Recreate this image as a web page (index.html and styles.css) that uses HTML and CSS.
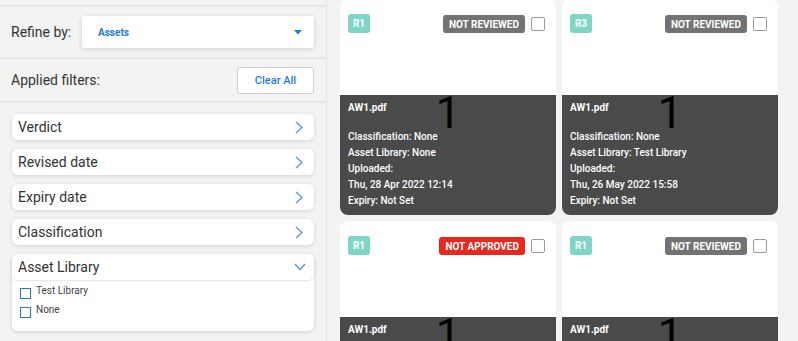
FILE: index.html
```html
<!DOCTYPE html>
<html lang="en">
<head>
    <meta charset="UTF-8">
    <meta name="viewport" content="width=device-width, initial-scale=1.0">
    <title>Assets</title>
    <link rel="stylesheet" href="styles.css">
</head>
<body>
    <div class="page">
        <aside class="sidebar">
            <div class="side-row refine-row">
                <span class="side-label">Refine by:</span>
                <div class="select-box">
                    <span>Assets</span>
                    <svg class="caret" width="8" height="5" viewBox="0 0 8 5"><polygon points="0,0 8,0 4,4.5" fill="#1f7ae0"/></svg>
                </div>
            </div>
            <div class="side-row applied-row">
                <span class="side-label">Applied filters:</span>
                <button class="clear-btn">Clear All</button>
            </div>
            <div class="filters">
                <div class="filter-item">
                    <span>Verdict</span>
                    <svg class="chev" width="8" height="13" viewBox="0 0 8 13"><polyline points="1,1 7,6.5 1,12" fill="none" stroke="#4a90e2" stroke-width="1.2"/></svg>
                </div>
                <div class="filter-item">
                    <span>Revised date</span>
                    <svg class="chev" width="8" height="13" viewBox="0 0 8 13"><polyline points="1,1 7,6.5 1,12" fill="none" stroke="#4a90e2" stroke-width="1.2"/></svg>
                </div>
                <div class="filter-item">
                    <span>Expiry date</span>
                    <svg class="chev" width="8" height="13" viewBox="0 0 8 13"><polyline points="1,1 7,6.5 1,12" fill="none" stroke="#4a90e2" stroke-width="1.2"/></svg>
                </div>
                <div class="filter-item">
                    <span>Classification</span>
                    <svg class="chev" width="8" height="13" viewBox="0 0 8 13"><polyline points="1,1 7,6.5 1,12" fill="none" stroke="#4a90e2" stroke-width="1.2"/></svg>
                </div>
                <div class="filter-group">
                    <div class="filter-item open">
                        <span>Asset Library</span>
                        <svg class="chev-down" width="12" height="8" viewBox="0 0 12 8"><polyline points="1,1 6,6.5 11,1" fill="none" stroke="#4a90e2" stroke-width="1.2"/></svg>
                    </div>
                    <ul class="option-list">
                        <li><span class="opt-box"></span>Test Library</li>
                        <li><span class="opt-box"></span>None</li>
                    </ul>
                </div>
            </div>
        </aside>

        <main class="grid">
            <div class="card">
                <div class="card-top">
                    <span class="rev">R1</span>
                    <span class="status">NOT REVIEWED</span>
                    <span class="card-check"></span>
                </div>
                <div class="thumb-num">1</div>
                <div class="card-info">
                    <div class="file-name">AW1.pdf</div>
                    <div class="meta">Classification: None</div>
                    <div class="meta">Asset Library: None</div>
                    <div class="meta">Uploaded:</div>
                    <div class="meta">Thu, 28 Apr 2022 12:14</div>
                    <div class="meta">Expiry: Not Set</div>
                </div>
            </div>
            <div class="card">
                <div class="card-top">
                    <span class="rev">R3</span>
                    <span class="status">NOT REVIEWED</span>
                    <span class="card-check"></span>
                </div>
                <div class="thumb-num">1</div>
                <div class="card-info">
                    <div class="file-name">AW1.pdf</div>
                    <div class="meta">Classification: None</div>
                    <div class="meta">Asset Library: Test Library</div>
                    <div class="meta">Uploaded:</div>
                    <div class="meta">Thu, 26 May 2022 15:58</div>
                    <div class="meta">Expiry: Not Set</div>
                </div>
            </div>
            <div class="card">
                <div class="card-top">
                    <span class="rev">R1</span>
                    <span class="status rejected">NOT APPROVED</span>
                    <span class="card-check"></span>
                </div>
                <div class="thumb-num">1</div>
                <div class="card-info">
                    <div class="file-name">AW1.pdf</div>
                    <div class="meta">Classification: None</div>
                    <div class="meta">Asset Library: None</div>
                    <div class="meta">Uploaded:</div>
                    <div class="meta">Thu, 28 Apr 2022 12:14</div>
                    <div class="meta">Expiry: Not Set</div>
                </div>
            </div>
            <div class="card">
                <div class="card-top">
                    <span class="rev">R1</span>
                    <span class="status">NOT REVIEWED</span>
                    <span class="card-check"></span>
                </div>
                <div class="thumb-num">1</div>
                <div class="card-info">
                    <div class="file-name">AW1.pdf</div>
                    <div class="meta">Classification: None</div>
                    <div class="meta">Asset Library: None</div>
                    <div class="meta">Uploaded:</div>
                    <div class="meta">Thu, 28 Apr 2022 12:14</div>
                    <div class="meta">Expiry: Not Set</div>
                </div>
            </div>
        </main>
    </div>
</body>
</html>
```

FILE: styles.css
```css
* {
    margin: 0;
    padding: 0;
    box-sizing: border-box;
}

body {
    font-family: Roboto, 'Liberation Sans', sans-serif;
    background-color: #f3f3f3;
    color: #333;
    overflow: hidden;
}

.page {
    display: flex;
    height: 341px;
    overflow: hidden;
}

/* sidebar */

.sidebar {
    width: 327px;
    flex-shrink: 0;
    border-right: 1px solid #e4e4e4;
    padding-top: 5px;
}

.side-row {
    display: flex;
    align-items: center;
    justify-content: space-between;
    border-top: 2px solid #e6e6e6;
    padding: 0 12px 0 11px;
}

.refine-row {
    height: 52px;
}

.applied-row {
    height: 46px;
    border-bottom: 2px solid #e6e6e6;
}

.side-label {
    font-size: 14px;
    color: #333;
}

.select-box {
    width: 232px;
    height: 32px;
    background-color: #fff;
    border-radius: 3px;
    box-shadow: 0 1px 5px rgba(0, 0, 0, 0.15);
    display: flex;
    align-items: center;
    justify-content: space-between;
    padding: 0 12px 0 16px;
    font-size: 10px;
    font-weight: 700;
    color: #1f7ae0;
}

.clear-btn {
    width: 77px;
    height: 27px;
    background-color: #fff;
    border: 1px solid #cfcfcf;
    border-radius: 3px;
    font-family: Roboto, 'Liberation Sans', sans-serif;
    font-size: 11px;
    font-weight: 500;
    color: #1f7ae0;
    margin-top: 1px;
}

.filters {
    padding: 11px 12px 0 12px;
    display: flex;
    flex-direction: column;
    gap: 9px;
}

.filter-item {
    height: 26px;
    background-color: #fff;
    border-radius: 6px;
    box-shadow: 0 1px 4px rgba(0, 0, 0, 0.13);
    display: flex;
    align-items: center;
    justify-content: space-between;
    padding: 0 11px 0 6px;
    font-size: 14px;
    color: #333;
}

.filter-group {
    background-color: #fff;
    border-radius: 6px;
    box-shadow: 0 1px 4px rgba(0, 0, 0, 0.15);
}

.filter-item.open {
    box-shadow: 0 1px 2px rgba(0, 0, 0, 0.12);
    padding-right: 8px;
}

.option-list {
    list-style: none;
    padding: 5px 0 8px 8px;
}

.option-list li {
    display: flex;
    align-items: flex-start;
    font-size: 10px;
    color: #444;
    height: 19px;
}

.opt-box {
    width: 11px;
    height: 11px;
    border: 1px solid #1f7ae0;
    margin-right: 5px;
    margin-top: 3px;
}

/* cards */

.grid {
    display: grid;
    grid-template-columns: 216px 216px;
    grid-auto-rows: 216px;
    gap: 6px 6px;
    padding-left: 13px;
    margin-top: -1px;
}

.card {
    position: relative;
    background-color: #fff;
    border-radius: 8px;
    overflow: hidden;
    display: flex;
    flex-direction: column;
}

.card-top {
    height: 96px;
    display: flex;
    align-items: flex-start;
    padding: 15px 11px 0 8px;
}

.rev {
    width: 22px;
    height: 19px;
    background-color: #7fd6c6;
    border-radius: 3px;
    color: #fff;
    font-size: 10px;
    font-weight: 700;
    display: flex;
    align-items: center;
    justify-content: center;
    margin-right: auto;
}

.status {
    height: 18px;
    padding: 0 6px;
    background-color: #737373;
    border-radius: 3px;
    color: #fff;
    font-size: 10px;
    font-weight: 700;
    display: flex;
    align-items: center;
    margin-top: 1px;
}

.status.rejected {
    background-color: #e8281f;
}

.card-check {
    width: 14px;
    height: 14px;
    border: 1px solid #9a9a9a;
    border-radius: 2px;
    margin: 3px 0 0 6px;
}

.thumb-num {
    position: absolute;
    top: 92px;
    left: 0;
    right: 0;
    text-align: center;
    font-family: Roboto, 'Liberation Sans', sans-serif;
    font-weight: 400;
    font-size: 44px;
    line-height: 44px;
    color: #000;
}

.card-info {
    flex: 1;
    background-color: #4a4a4a;
    color: #fff;
    padding: 6px 8px 0 8px;
    font-size: 10px;
}

.file-name {
    font-weight: 700;
    line-height: 14px;
    margin-bottom: 14px;
}

.meta {
    line-height: 16px;
    font-weight: 500;
}
```
